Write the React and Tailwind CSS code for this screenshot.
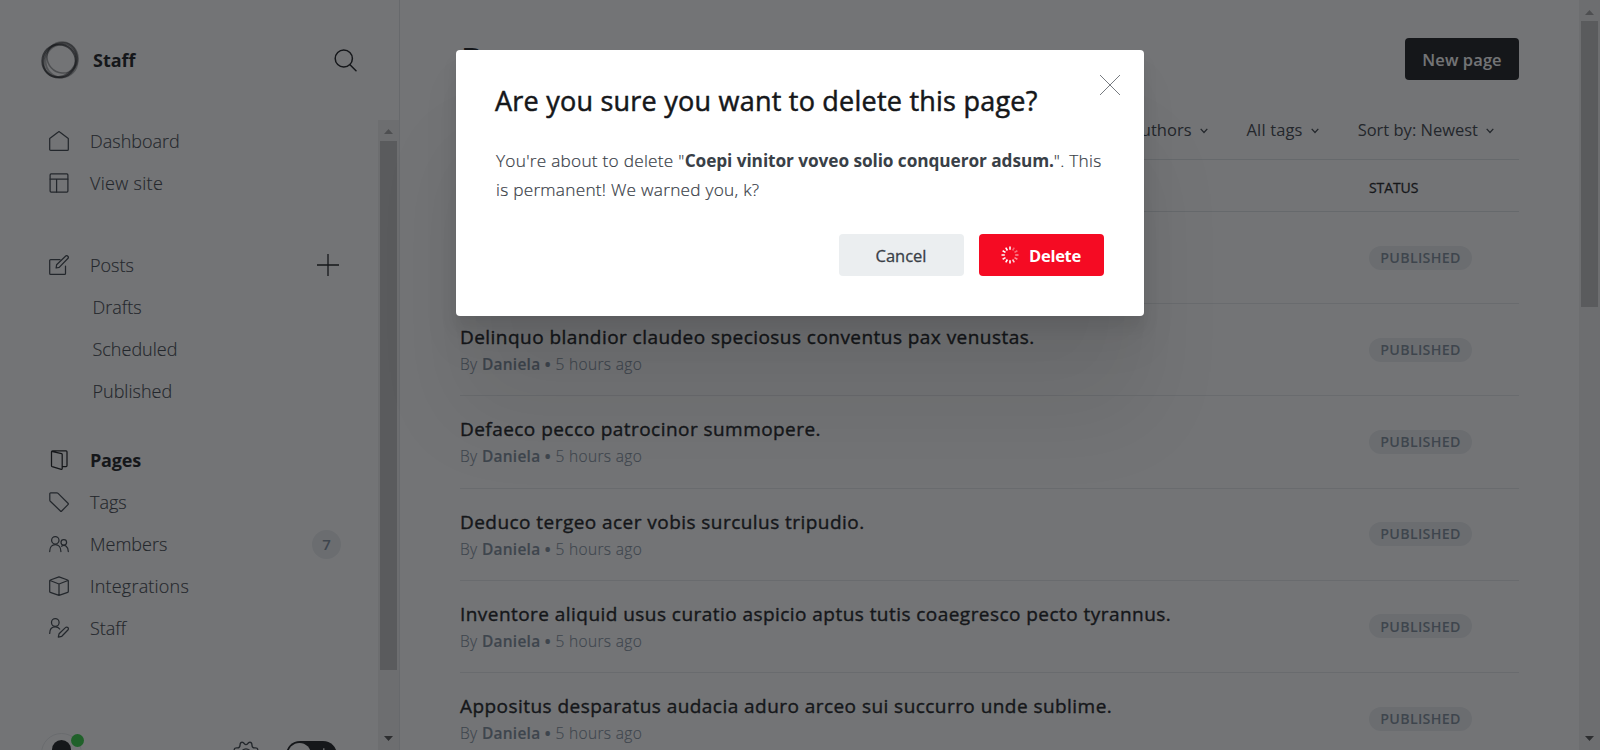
const iconPaths = {
  home: <path d="M.7 7.6 9.3.9a1.1 1.1 0 0 1 1.4 0l8.6 6.7v10.8a.9.9 0 0 1-.9.9H1.6a.9.9 0 0 1-.9-.9Z" />,
  layout: (
    <>
      <rect x="1.1" y=".9" width="17.8" height="18.2" rx="1" />
      <path d="M1.1 6h17.8M7.6 6v13" />
    </>
  ),
  edit: (
    <>
      <path d="M11 4.7H1.6a.9.9 0 0 0-.9.9v12.8c0 .5.4.9.9.9h14a.9.9 0 0 0 .9-.9V11" />
      <path d="m7.100 13 .5-3.200 8.900-8.600a1.600 1.600 0 0 1 2.300 2.300l-8.600 8.900Z" />
    </>
  ),
  pages: (
    <>
      <path d="m2.6 1.3 10 2.4c.4.1.6.4.6.8v14.1c0 .6-.5.9-1 .7l-9-2.6a1 1 0 0 1-.7-1V1.8c0-.6.4-1 1-1h13.6c.5 0 .9.4.9.9v13.9c0 .5-.4.9-.9.9h-3.9" />
    </>
  ),
  tag: <path d="M1.6.9h6.2c.5 0 1 .2 1.3.5l9.9 9.9c.4.4.4.9 0 1.3l-6.3 6.4c-.4.4-.9.4-1.3 0L1.3 9.2a1.8 1.8 0 0 1-.5-1.3V1.7c0-.4.3-.8.8-.8Z" />,
  members: (
    <>
      <circle cx="6.3" cy="6.3" r="3.7" />
      <circle cx="14.8" cy="8.3" r="2.8" />
      <path d="M.7 17.6c0-4.4 2.4-7 5.600-7s5.600 2.600 5.600 7M12.500 12.200c3.500-2 6.800.5 6.800 5.400" />
    </>
  ),
  box: (
    <>
      <path d="M10 .8 18.7 4c.4.1.6.4.6.8v10.8c0 .4-.2.7-.6.8L10 19.4l-8.7-3a.9.9 0 0 1-.6-.8V4.800c0-.4.2-.7.6-.8ZM10 8v11.400M1 4.500 10 8l9-3.500" />
    </>
  ),
  staff: (
    <>
      <circle cx="6.3" cy="4.500" r="3.800" />
      <path d="M.7 15.400c0-4 2.200-6.600 5.600-6.600 1.900 0 3.400.8 4.400 2.200" />
      <path d="m9.300 19.200.8-3.500 6.300-6.100a1.700 1.700 0 0 1 2.500 2.400l-6.100 6.300Z" />
    </>
  ),
};

function NavIcon({ name }) {
  return (
    <svg viewBox="0 0 20 20" className="block size-5 shrink-0" fill="none" stroke="currentColor" strokeWidth="1.25" strokeLinecap="round" strokeLinejoin="round">
      {iconPaths[name]}
    </svg>
  );
}

function NavItem({ icon, label, active, children }) {
  return (
    <div className={`flex h-[42px] items-center pl-[49px] pr-[37px] ${active ? "font-bold text-[#15171a]" : "font-light text-[#394047]"}`}>
      <NavIcon name={icon} />
      <span className={`ml-[21px] pt-px ${active ? "" : "[-webkit-text-stroke:0.15px_#394047]"}`}>{label}</span>
      {children}
    </div>
  );
}

function SubItem({ label }) {
  return <div className="flex h-[42px] items-center pl-[92.500px] pt-px font-light text-[#394047] [-webkit-text-stroke:0.15px_#394047]">{label}</div>;
}

function Arrow({ up, dim }) {
  return (
    <svg viewBox="0 0 9 5" className={`block h-[5px] w-[9px] ${dim ? "text-[#a3a3a3]" : "text-[#505050]"}`} fill="currentColor">
      <path d={up ? "M4.500 0 9 5H0Z" : "M0 0h9L4.500 5Z"} />
    </svg>
  );
}

function Chevron() {
  return (
    <svg viewBox="0 0 8 6" className="ml-2 mt-0.5 block h-1.5 w-2" fill="none" stroke="#394047" strokeWidth="1.300">
      <path d="M.7.900 4 4.500 7.300.900" />
    </svg>
  );
}

function Sidebar() {
  return (
    <aside className="flex h-[750px] w-[400px] shrink-0 flex-col border-r border-[#e1e4e6]">
      <div className="flex h-[120px] shrink-0 items-center pl-[41px] pr-[42px]">
        <svg viewBox="0 0 38 38" className="size-[38px]" fill="none" stroke="#15171a">
          <ellipse cx="18" cy="20" rx="16.700" ry="16.600" strokeWidth="2" opacity=".65" />
          <ellipse cx="21.500" cy="16.500" rx="15.800" ry="15.200" strokeWidth="1.500" opacity=".4" transform="rotate(48 21.500 16.500)" />
          <ellipse cx="19" cy="19" rx="18" ry="15.400" strokeWidth="2" opacity=".5" transform="rotate(-50 19 19)" />
          <ellipse cx="20.500" cy="20" rx="16" ry="16.500" strokeWidth="2" opacity=".35" />
        </svg>
        <span className="ml-[14px] pt-px text-[18px] font-bold text-[#15171a]">Staff</span>
        <svg viewBox="0 0 23 23" className="ml-auto size-[23px]" fill="none" stroke="#15171a" strokeWidth="1.500" strokeLinecap="round">
          <circle cx="9.800" cy="9.500" r="8.600" />
          <path d="m16 15.700 6 6" />
        </svg>
      </div>
      <div className="flex min-h-0 grow">
        <div className="flex min-w-0 grow flex-col text-[18px]">
          <nav className="h-[604px] shrink-0">
            <NavItem icon="home" label="Dashboard" />
            <NavItem icon="layout" label={<span className="tracking-[0.300px]">View site</span>} />
            <div className="h-10" />
            <NavItem icon="edit" label="Posts">
              <svg viewBox="0 0 22 22" className="ml-auto mr-0.5 size-[22px]" stroke="#15171a" strokeWidth="1.300">
                <path d="M0 11h22M11 0v22" />
              </svg>
            </NavItem>
            <SubItem label="Drafts" />
            <SubItem label="Scheduled" />
            <SubItem label="Published" />
            <div className="h-[27px]" />
            <NavItem icon="pages" label={<span className="tracking-[-0.200px]">Pages</span>} active />
            <NavItem icon="tag" label="Tags" />
            <NavItem icon="members" label="Members">
              <span className="ml-auto flex size-[29px] items-center justify-center rounded-full bg-[#ebeef0] text-[15px] font-semibold text-[#7c8b9a]">7</span>
            </NavItem>
            <NavItem icon="box" label={<span className="tracking-[0.200px]">Integrations</span>} />
            <NavItem icon="staff" label="Staff" />
          </nav>
          <div className="flex h-[26px] items-start overflow-hidden pl-[41px] pt-[9px]">
            <div className="relative h-[41px] w-[41px] shrink-0 rounded-full border border-[#e6e9eb]">
              <span className="absolute left-[10px] top-[6px] size-[19px] rounded-full bg-[#15171a]" />
              <span className="absolute left-[29px] top-0 size-[13px] rounded-full bg-[#30cf43]" />
            </div>
            <svg viewBox="0 0 26 26" className="ml-[151px] mt-[8px] size-[26px] shrink-0" fill="none" stroke="#394047" strokeWidth="1.400" strokeLinejoin="round">
              <path d="M1.200 9.200c0-2 1-2.500 3-2.300 2 .1 2.700-.7 2.800-2.700C7.100 1.600 8.400.9 9.800 1.400c1.700.7 1.500 2.200 3.200 2.200s1.500-1.500 3.200-2.200c1.400-.5 2.700.2 2.800 2.800.1 2 .8 2.800 2.800 2.700 2-.2 3 .3 3 2.300 0 1.800-1.600 2-1.600 3.800s1.600 2 1.600 3.800c0 2-1 2.500-3 2.300-2-.1-2.700.7-2.800 2.700-.1 2.600-1.400 3.300-2.800 2.800-1.700-.7-1.500-2.200-3.200-2.200s-1.500 1.500-3.200 2.200c-1.400.5-2.700-.2-2.800-2.800-.1-2-.8-2.800-2.800-2.700-2 .2-3-.3-3-2.300 0-1.800 1.600-2 1.600-3.800s-1.600-2-1.600-3.800Z" />
              <circle cx="13" cy="12.600" r="4.700" />
            </svg>
            <div className="ml-[27px] mt-[8px] flex h-[28px] w-[51px] shrink-0 items-start rounded-full bg-[#15171a] p-0.5">
              <span className="size-6 rounded-full bg-white" />
              <svg viewBox="0 0 20 20" className="ml-1 mt-1 size-5" stroke="#fff" strokeWidth="1.300">
                <path d="M9 1v4M3.500 3.500l2 2M14.500 3.500l-2 2M1 9h3M14 9h3" />
              </svg>
            </div>
          </div>
        </div>
        <div className="flex w-[21px] shrink-0 flex-col items-center bg-[#f1f1f1]">
          <div className="flex h-[21px] items-center pt-0.5"><Arrow up dim /></div>
          <div className="h-[529px] w-[17px] bg-[#c1c1c1]" />
          <div className="mt-auto pb-[9px]"><Arrow /></div>
        </div>
      </div>
    </aside>
  );
}

const titles = [
  "Coepi vinitor voveo solio conqueror adsum.",
  "Delinquo blandior claudeo speciosus conventus pax venustas.",
  "Defaeco pecco patrocinor summopere.",
  "Deduco tergeo acer vobis surculus tripudio.",
  "Inventore aliquid usus curatio aspicio aptus tutis coaegresco pecto tyrannus.",
  "Appositus desparatus audacia aduro arceo sui succurro unde sublime.",
];

function PostRow({ title }) {
  return (
    <div className="flex h-[92.200px] items-center border-b border-[#e6e9eb]">
      <div className="w-[909px] shrink-0 whitespace-nowrap pt-[2px]">
        <div className="text-[19px] font-normal leading-[28px] tracking-[0.450px] text-[#15171a] [-webkit-text-stroke:0.4px_#15171a]">{title}</div>
        <div className="text-[15.500px] font-light leading-[27px] tracking-[0.350px] text-[#7c8b9a] [-webkit-text-stroke:0.15px_#7c8b9a]">
          By <span className="font-semibold tracking-[0.250px]">Daniela</span> <span className="font-bold">•</span> 5 hours ago
        </div>
      </div>
      <span className="flex h-6 w-[103px] items-center justify-center rounded-full bg-[#ebeef0] text-[14.250px] font-semibold tracking-[0.300px] text-[#7c8b9a]">PUBLISHED</span>
    </div>
  );
}

function Main() {
  return (
    <main className="h-[750px] w-[1179px] shrink-0 overflow-hidden pl-[60px] pr-[60px]">
      <header className="flex h-[101px] items-start justify-between pt-[38px]">
        <h1 className="-mt-px pl-px text-[34px] font-bold leading-[44px] text-[#15171a]">Pages</h1>
        <button className="flex h-[42px] w-[114px] items-center justify-center rounded-[4px] bg-[#15171a] pt-0.5 text-[16.500px] font-semibold tracking-[0.100px] text-white">New page</button>
      </header>
      <div className="flex h-[58px] items-center justify-end pr-[25px] text-[16.500px] text-[#394047]">
        <span className="flex items-center">All authors<Chevron /></span>
        <span className="ml-[39px] flex items-center tracking-[0.150px]">All tags<Chevron /></span>
        <span className="ml-[39px] flex items-center">Sort by: Newest<Chevron /></span>
      </div>
      <div className="flex h-[53px] items-center border-y border-[#dfe3e6] pl-[909px] pt-0.5 text-[14px] font-normal tracking-[-0.100px] text-[#15171a] [-webkit-text-stroke:0.3px_#15171a]"><span className="pt-px">STATUS</span></div>
      <div>
        {titles.map((title) => <PostRow key={title} title={title} />)}
      </div>
    </main>
  );
}

const spokes = [1, 0.35, 0.4, 0.5, 0.55, 0.8, 1, 1, 0.95, 0.95, 1, 1];

function Spinner() {
  return (
    <svg viewBox="0 0 18 18" className="size-[18px]" stroke="#fff" strokeWidth="1.600">
      {spokes.map((opacity, i) => (
        <path key={i} d="M9 .5v3.300" opacity={opacity} transform={`rotate(${i * 30} 9 9)`} />
      ))}
    </svg>
  );
}

function DeleteDialog() {
  return (
    <div className="absolute inset-0 flex items-start justify-center bg-[#15171a]/60 pt-[50px]">
      <section className="flex h-[266px] w-[688px] flex-col rounded-[4px] bg-white px-10 pt-[25px] shadow-[0_3px_3px_rgba(0,0,0,0.02),0_12px_16px_rgba(0,0,0,0.07),0_30px_40px_rgba(0,0,0,0.05),0_100px_90px_rgba(0,0,0,0.07)]">
        <div className="flex justify-between">
          <h2 className="-ml-px mt-[6px] whitespace-nowrap text-[27px] font-normal leading-10 tracking-[0.230px] text-[#15171a] [-webkit-text-stroke:0.5px_#15171a]">Are you sure you want to delete this page?</h2>
          <svg viewBox="0 0 20 20" className="-mr-4 size-5" stroke="#777b80" strokeWidth="1">
            <path d="m0 0 20 20M20 0 0 20" />
          </svg>
        </div>
        <p className="mt-[25px] whitespace-nowrap text-[17.250px] font-light leading-[29px] tracking-[0.250px] text-[#394047]">
          <span className="[-webkit-text-stroke:0.2px_#394047]">You're about to delete "</span>
          <strong className="font-bold tracking-[-0.080px]">Coepi vinitor voveo solio conqueror adsum.</strong>
          <span className="[-webkit-text-stroke:0.2px_#394047]">". This</span>
          <br />
          <span className="[-webkit-text-stroke:0.2px_#394047]">is permanent! We warned you, k?</span>
        </p>
        <div className="mt-[30px] flex justify-end gap-[15px]">
          <button className="h-[42px] w-[125px] rounded-[4px] bg-[#ebeef0] pt-0.5 pr-px text-[16.500px] font-normal text-[#394047] [-webkit-text-stroke:0.3px_#394047]">Cancel</button>
          <button className="flex h-[42px] w-[125px] items-center justify-center gap-[10px] rounded-[4px] bg-[#f50b23] pr-px text-[16.500px] font-bold text-white">
            <Spinner /><span className="pt-0.5 tracking-[-0.300px]">Delete</span>
          </button>
        </div>
      </section>
    </div>
  );
}

export default function App() {
  return (
    <div className="relative flex h-[750px] w-[1600px] overflow-hidden bg-white font-['Open_Sans','Noto_Sans',sans-serif]">
      <Sidebar />
      <Main />
      <div className="flex w-[21px] shrink-0 flex-col items-center bg-[#f1f1f1]">
        <div className="flex h-[21px] items-center pt-1"><Arrow up dim /></div>
        <div className="h-[286px] w-[17px] bg-[#c1c1c1]" />
        <div className="mt-auto pb-[9px]"><Arrow /></div>
      </div>
      <DeleteDialog />
    </div>
  );
}
